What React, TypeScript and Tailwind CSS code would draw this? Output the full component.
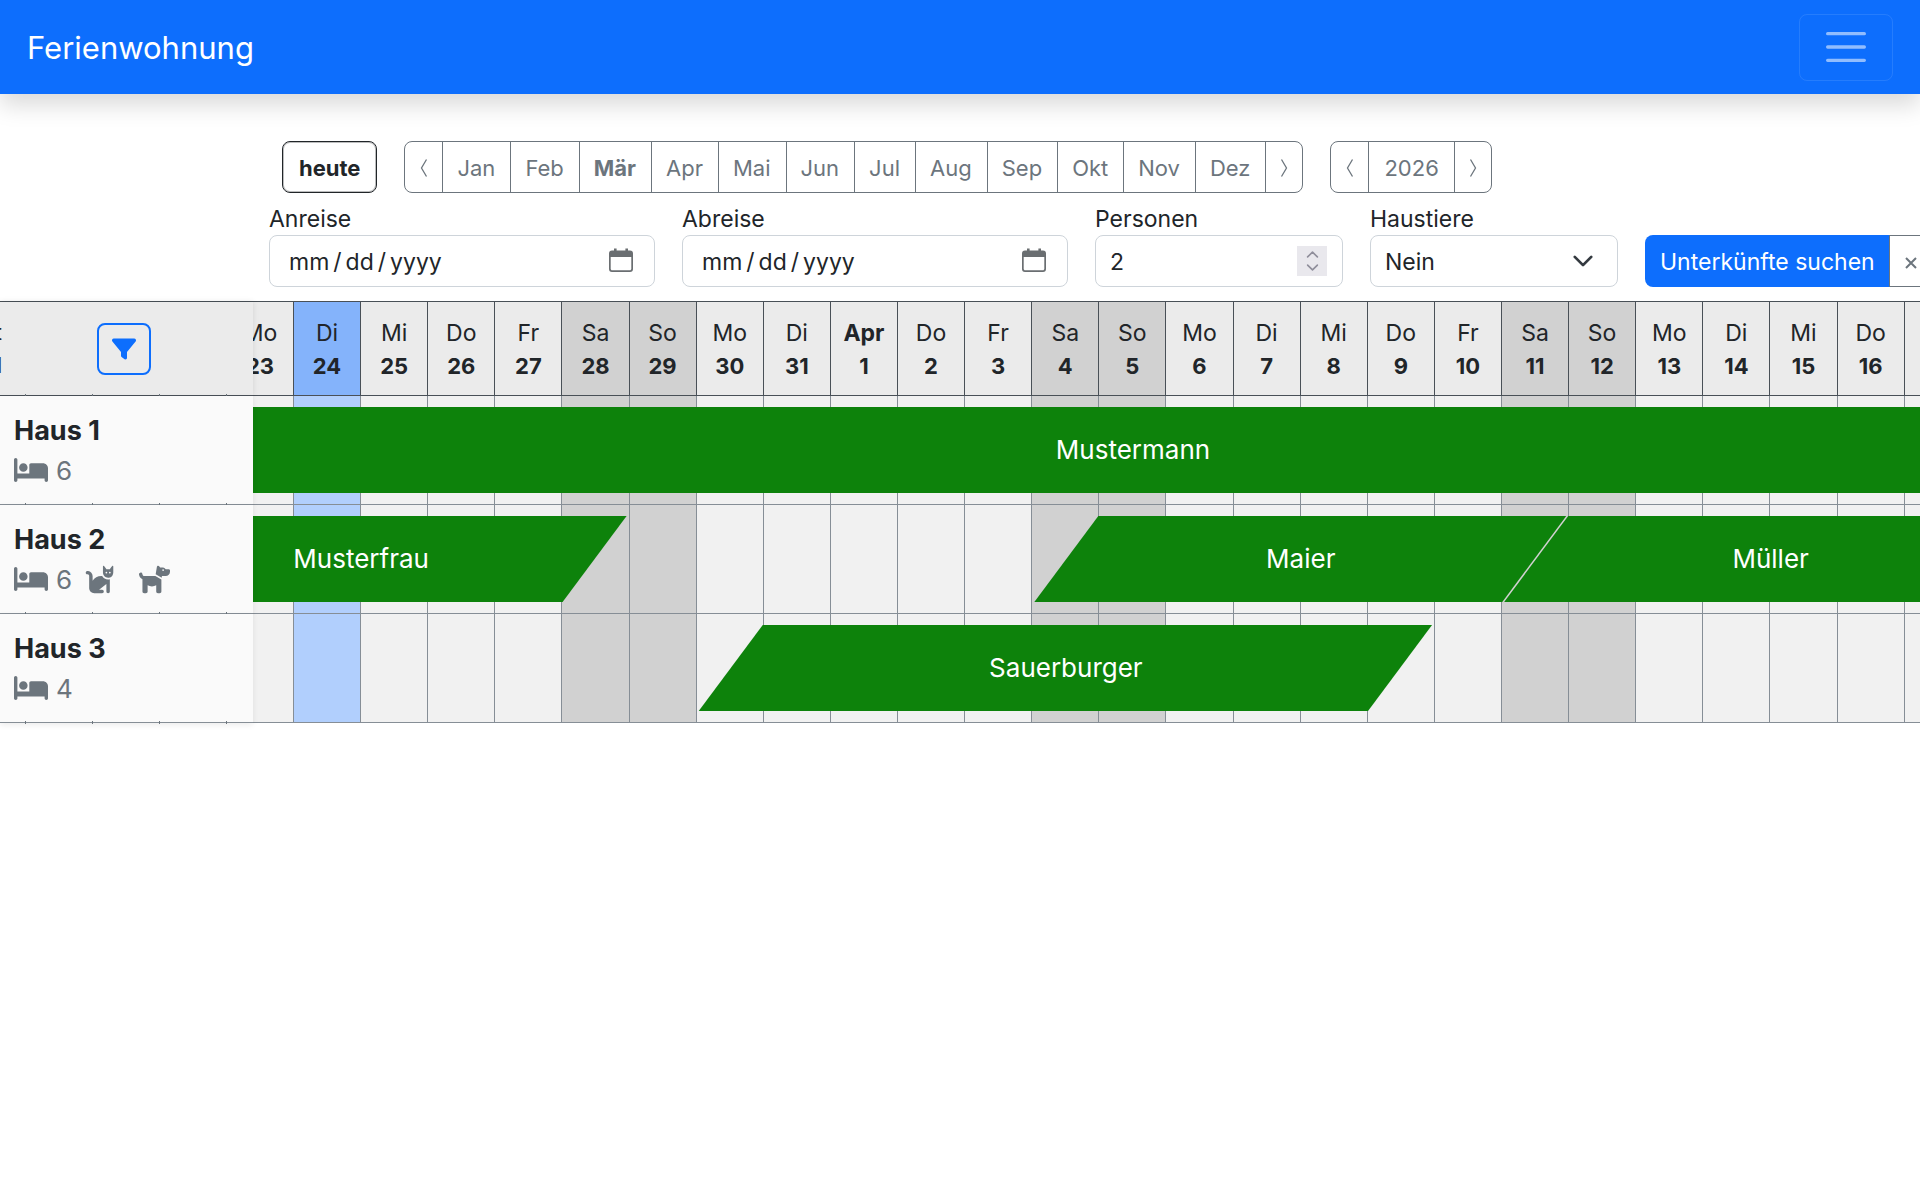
import React, { useState } from "react";
import clsx from "clsx";
import { FaBed, FaCat, FaDog, FaFilter } from "react-icons/fa6";

type Booking = { name: string; start: number; end: number; };
type House = { name: string; beds: number; pets: boolean; bookings: Booking[]; };

const months = ["Jan", "Feb", "Mär", "Apr", "Mai", "Jun", "Jul", "Aug", "Sep", "Okt", "Nov", "Dez"];
const weekdays = ["Di", "Mi", "Do", "Fr", "Sa", "So", "Mo"];
const dayCount = 25;

// day 0 is Di 24.03., start and end are counted from there
const houses: House[] = [
  { name: "Haus 1", beds: 6, pets: false, bookings: [{ name: "Mustermann", start: -4, end: 29 }] },
  { name: "Haus 2", beds: 6, pets: true, bookings: [
    { name: "Musterfrau", start: -3, end: 5 },
    { name: "Maier", start: 11, end: 19 },
    { name: "Müller", start: 18, end: 26 },
  ] },
  { name: "Haus 3", beds: 4, pets: false, bookings: [{ name: "Sauerburger", start: 6, end: 17 }] },
];

const days = Array.from({ length: dayCount }, (_, i) => {
  const date = i + 24 > 31 ? i - 7 : i + 24;
  return {
    label: date === 1 ? "Apr" : weekdays[i % 7],
    date,
    today: i === 0,
    weekend: i % 7 === 4 || i % 7 === 5,
  };
});

const groupButton = "-ml-px flex h-[52px] items-center justify-center border border-[#6c757d] pt-[2px] text-[#6c757d] first:ml-0 first:rounded-l-lg last:rounded-r-lg";
const field = "h-[52px] w-full rounded-lg border border-[#ced4da] bg-white pt-[2px] text-[#212529]";

function Arrow({ right }: { right?: boolean }) {
  return (
    <svg width="8" height="20" viewBox="0 0 8 20" fill="none" stroke="currentColor" strokeWidth="1.3" className={right ? "rotate-180" : ""}>
      <path d="M6.5 1.5L1.5 10l5 8.5" />
    </svg>
  );
}

function Chevron({ up, className }: { up?: boolean; className?: string }) {
  return (
    <svg viewBox="0 0 16 16" fill="none" stroke="currentColor" strokeWidth="2" strokeLinecap="round" strokeLinejoin="round" className={className}>
      <path d={up ? "m2 11 6-6 6 6" : "m2 5 6 6 6-6"} />
    </svg>
  );
}

function DateField({ id, label }: { id: string; label: string }) {
  return (
    <div className="w-[386px] shrink-0">
      <label htmlFor={id} className="block leading-8">{label}</label>
      <div className="relative">
        <input id={id} type="date" className={clsx(field, "pr-4 pl-[18px] [&::-webkit-calendar-picker-indicator]:opacity-0 [&::-webkit-datetime-edit-text]:px-[3px]")} />
        <svg width="24" height="24" viewBox="0 0 24 24" className="pointer-events-none absolute top-[13px] right-[22px] text-[#6a6e71]">
          <path fill="currentColor" d="M5 .5h2.600v2h8.800v-2H19v2h2A3 3 0 0 1 24 5.500V21a3 3 0 0 1-3 3H3a3 3 0 0 1-3-3V5.500a3 3 0 0 1 3-3h2zM1.700 9v11.800c0 .9.600 1.500 1.500 1.500h17.600c.9 0 1.500-.6 1.500-1.500V9z" fillRule="evenodd" />
        </svg>
      </div>
    </div>
  );
}

function Ticks() {
  return (
    <span className="absolute bottom-[-2px] left-[25px] flex gap-[66px]">
      {[20, 21, 22, 23].map((day) => <span key={day} className="h-[3px] w-px bg-[#6c757d]" />)}
    </span>
  );
}

function BookingBar({ booking }: { booking: Booking }) {
  return (
    <button
      type="button"
      className="absolute inset-y-0 flex items-center justify-center bg-[#0d820b] pb-[2px] text-[26px] text-white [clip-path:polygon(66px_0,calc(100%-3px)_0,calc(100%-67px)_100%,2px_100%)]"
      style={{ left: `${booking.start * 100 / dayCount}%`, width: `${(booking.end - booking.start) * 100 / dayCount}%` }}
    >
      {booking.name}
    </button>
  );
}

export default function App() {
  const [month, setMonth] = useState("Mär");
  const [year, setYear] = useState(2026);
  const [persons, setPersons] = useState(2);
  return (
    <div className="min-h-screen w-full overflow-hidden bg-white font-['Inter',sans-serif] text-[22px] text-[#212529]">
      <nav className="flex h-[94px] items-center justify-between bg-[#0d6efd] px-[27px] shadow-[0_11px_22px_rgba(0,0,0,0.15)]">
        <a href="#" className="pt-[2px] text-[31px] text-white">Ferienwohnung</a>
        <button type="button" aria-label="Menü" className="flex h-[67px] w-[94px] items-center justify-center rounded-lg border border-white/10">
          <svg width="50" height="50" viewBox="0 0 30 30" stroke="rgba(255,255,255,0.55)" strokeLinecap="round" strokeMiterlimit="10" strokeWidth="2">
            <path d="M4 7h22M4 15h22M4 23h22" />
          </svg>
        </button>
      </nav>

      <div className="mt-[47px] flex gap-[27px] pl-[282px]">
        <button type="button" className="h-[52px] rounded-lg border border-[#212529] px-4 pt-[2px] font-bold ring-1 ring-[#212529]/30 ring-inset">heute</button>
        <div className="flex">
          <button type="button" aria-label="Monat zurück" className={clsx(groupButton, "w-[39px]")}><Arrow /></button>
          {months.map((item) => (
            <button key={item} type="button" onClick={() => setMonth(item)} className={clsx(groupButton, "pr-[15px] pl-[14px]", { "font-bold": item === month })}>
              {item}
            </button>
          ))}
          <button type="button" aria-label="Monat vor" className={clsx(groupButton, "w-[38px]")}><Arrow right /></button>
        </div>
        <div className="flex">
          <button type="button" aria-label="Jahr zurück" onClick={() => setYear(year - 1)} className={clsx(groupButton, "w-[39px]")}><Arrow /></button>
          <button type="button" className={clsx(groupButton, "px-[15px]")}>{year}</button>
          <button type="button" aria-label="Jahr vor" onClick={() => setYear(year + 1)} className={clsx(groupButton, "w-[38px]")}><Arrow right /></button>
        </div>
      </div>

      <form className="mt-[10px] flex items-end gap-[27px] pl-[269px] text-[23px]">
        <DateField id="anreise" label="Anreise" />
        <DateField id="abreise" label="Abreise" />
        <div className="w-[248px] shrink-0">
          <label htmlFor="personen" className="block leading-8">Personen</label>
          <div className="relative">
            <input id="personen" type="number" value={persons} onChange={(e) => setPersons(Number(e.target.value))} className={clsx(field, "px-[14px] [appearance:textfield]")} />
            <span className="pointer-events-none absolute top-[11px] right-4 flex h-[30px] w-[30px] flex-col items-center justify-center bg-[#e9e8ed] text-[#8f8e9b]">
              <Chevron up className="size-[13px]" />
              <Chevron className="size-[13px]" />
            </span>
          </div>
        </div>
        <div className="w-[248px] shrink-0">
          <label htmlFor="haustiere" className="block leading-8">Haustiere</label>
          <div className="relative">
            <select id="haustiere" className={clsx(field, "appearance-none px-[14px]")}>
              <option>Nein</option>
              <option>Ja</option>
            </select>
            <Chevron className="pointer-events-none absolute top-[15px] right-6 size-[22px] text-[#343a40]" />
          </div>
        </div>
        <div className="flex shrink-0">
          <button type="button" className="h-[52px] rounded-l-lg bg-[#0d6efd] px-[15px] pt-[2px] whitespace-nowrap text-white">Unterkünfte suchen</button>
          <button type="reset" aria-label="Suche zurücksetzen" className="-ml-px flex h-[52px] w-[46px] items-center rounded-r-lg border border-[#6c757d] pt-[3px] pl-[15px] text-[#6c757d]">
            <svg width="12" height="12" viewBox="0 0 12 12" stroke="currentColor" strokeWidth="2"><path d="M1 1l10 10M11 1L1 11" /></svg>
          </button>
        </div>
      </form>

      <div className="mt-[14px]">
        <table className="w-[calc(100%+52px)] table-fixed border-separate border-spacing-0 border-t border-[#495057]">
          <colgroup>
            <col className="w-[253px]" />
            <col className="w-[41px]" />
            {days.map((day, i) => <col key={i} />)}
          </colgroup>
          <thead>
            <tr className="h-[94px] leading-[33px]">
              <th className="relative z-20 border-b border-[#495057] bg-[#ebebeb] p-0 text-left shadow-[0_0_6px_rgba(0,0,0,0.1)]">
                <div className="flex items-center">
                  <span className="flex w-[97px] overflow-hidden">
                    <span className="flex w-[2px] flex-col items-end overflow-hidden">
                      <span className="font-normal">t</span>
                      <span>1</span>
                    </span>
                  </span>
                  <button type="button" aria-label="Filter" className="flex h-[52px] w-[54px] items-center justify-center rounded-lg border-2 border-[#0d6efd] text-[#0d6efd]">
                    <FaFilter className="size-6" />
                  </button>
                </div>
                <Ticks />
              </th>
              <th className="overflow-hidden border-r border-b border-[#495057] bg-[#ebebeb] p-0 pt-[2px]">
                <div className="flex justify-end">
                  <div className="w-[66px] shrink-0">
                    <div className="text-[23px] font-normal">Mo</div>
                    <div>23</div>
                  </div>
                </div>
              </th>
              {days.map((day, i) => (
                <th key={i} scope="col" className={clsx("border-r border-b border-[#495057] p-0 pt-[2px]", day.today ? "bg-[#84b3fb]" : day.weekend ? "bg-[#d1d1d1]" : "bg-[#ebebeb]")}>
                  <div className={clsx("text-[23px]", day.date === 1 ? "font-bold" : "font-normal")}>{day.label}</div>
                  <div>{day.date}</div>
                </th>
              ))}
            </tr>
          </thead>
          <tbody>
            {houses.map((house) => (
              <tr key={house.name} className="relative h-[109px]">
                <th scope="row" className="relative z-20 border-b border-[#868e96] bg-[#fafafa] p-0 pl-[14px] text-left shadow-[0_2px_6px_rgba(0,0,0,0.08)]">
                  <div className="pt-[2px] text-[27px] leading-[38px]">{house.name}</div>
                  <div className="flex h-10 items-center gap-2 text-[26px] font-normal text-[#6c757d]">
                    <FaBed className="size-[34px]" />
                    {house.beds}
                    {house.pets && <FaCat className="ml-1 size-[31px]" />}
                    {house.pets && <FaDog className="ml-4 size-[31px]" />}
                  </div>
                  <Ticks />
                </th>
                <td className="border-r border-b border-[#868e96] bg-[#f1f1f1] p-0">
                  <div className="absolute top-[11px] right-0 bottom-3 left-[294px]">
                    {house.bookings.map((booking) => <BookingBar key={booking.name} booking={booking} />)}
                  </div>
                </td>
                {days.map((day, i) => (
                  <td key={i} className={clsx("border-r border-b border-[#868e96] p-0", day.today ? "bg-[#b1cffd]" : day.weekend ? "bg-[#d1d1d1]" : "bg-[#f1f1f1]")} />
                ))}
              </tr>
            ))}
          </tbody>
        </table>
      </div>
    </div>
  );
}
